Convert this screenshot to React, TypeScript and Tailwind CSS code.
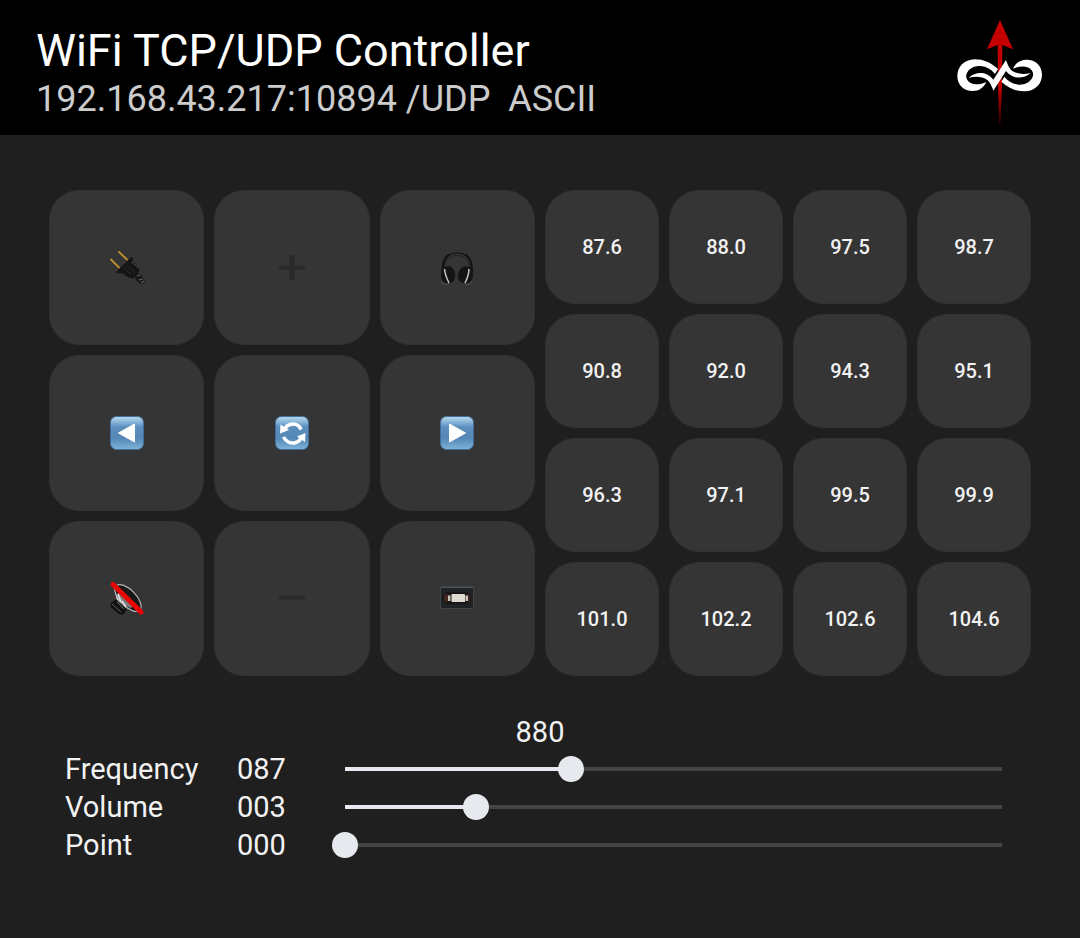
import { useState, type CSSProperties, type ReactNode } from "react";

function Logo() {
  return (
    <svg viewBox="48 24 264 330" className="h-[110px] w-[88px]" aria-hidden="true">
      <defs>
        <linearGradient id="shaft" x1="0" y1="0" x2="0" y2="1">
          <stop offset="0" stopColor="#c80000" />
          <stop offset="0.65" stopColor="#c00000" />
          <stop offset="1" stopColor="#300000" />
        </linearGradient>
      </defs>
      <path d="M180 30L219 118L187 105L186 230L181 346H178L174 230L173 105L141 118Z" fill="url(#shaft)" />
      <g fill="#fff">
        <path d="M174 177C152 158 132 148 104 148C72 149 52 171 52 198C52 226 72 243 98 243C118 243 131 233 139 216C122 224 105 225 92 219C79 212 75 199 82 187C90 173 106 167 122 168C140 170 154 178 165 192Z" />
        <path d="M184 215C206 234 226 244 254 244C286 243 306 221 306 194C306 166 286 149 260 149C240 149 227 159 219 176C236 168 253 167 266 173C279 180 283 193 276 205C268 219 252 225 236 224C218 222 204 214 193 200Z" />
        <path d="M86 203C100 190 124 185 140 193C149 198 155 203 160 209L198 150C203 165 210 178 216 182C230 192 250 194 272 189C258 202 234 207 218 199C209 194 203 190 198 183L160 242C155 227 148 214 142 210C128 200 108 198 86 203Z" />
      </g>
    </svg>
  );
}

function Glyph({ children }: { children: ReactNode }) {
  return (
    <svg viewBox="0 0 60 60" className="size-[60px]" aria-hidden="true">
      {children}
    </svg>
  );
}

function BlueKey({ id, children }: { id: string; children: ReactNode }) {
  return (
    <Glyph>
      <defs>
        <linearGradient id={id} x1="0" y1="0" x2="0" y2="1">
          <stop offset="0" stopColor="#b9d9ee" />
          <stop offset="0.15" stopColor="#8db9dc" />
          <stop offset="0.32" stopColor="#5c8fbe" />
          <stop offset="0.65" stopColor="#5587b5" />
          <stop offset="1" stopColor="#7db3d8" />
        </linearGradient>
      </defs>
      <rect x="13.5" y="13.5" width="33" height="33" rx="6" fill={`url(#${id})`} stroke="#416f99" />
      {children}
    </Glyph>
  );
}

const plug = (
  <Glyph>
    <g stroke="#c0902e" strokeWidth="1.8">
      <path d="M21.5 13.5L30.5 22M13.5 21L22.5 30" />
    </g>
    <path d="M34.5 19L36 20.5L35.5 23L40.5 27.5L42.5 33L40 37L36 40.5L30.5 39L25 35L20.5 35.5L19 34Z" fill="#151515" />
    <path d="M35 24L41 29.5" stroke="#77797c" strokeWidth="1" strokeDasharray="1.5 .7" />
    <path d="M26 30L34 36M29 27L38 35" stroke="#2b2b2b" strokeWidth="1" />
    <path d="M37 37L41 35L45 38L48 43L46 46L43 46L39 42Z" fill="#17181a" />
    <path d="M40 38L43 37M42 42L46 41M44 45L47 43" stroke="#626468" strokeWidth="1.2" />
  </Glyph>
);

const headphones = (
  <Glyph>
    <path d="M15.5 34C15.5 21 20 14.5 30 14.5S45 21 45 34" fill="none" stroke="#121212" strokeWidth="2.2" />
    <path d="M22 16C27 13.2 34 13.2 39 16" fill="none" stroke="#444" strokeWidth=".8" />
    <path d="M17.5 32C18 22 22 17.5 30 17.5S42 22 43 32" fill="none" stroke="#222" strokeWidth="1" />
    <path d="M18 29C24 26 29 32 28 38C28 42 26 45 22 45C16 46 14 42 14 37C14 33 15 31 18 29Z" fill="#141414" />
    <path d="M42 29C36 26 31 32 31 38C31 42 33 45 37 45C43 46 46 42 46 37C46 33 45 31 42 29Z" fill="#141414" />
    <path d="M17.5 31C18 36 20 41 22 45" fill="none" stroke="#c2c4c5" strokeWidth="1.5" />
    <path d="M42 31C42 37 40 41 38 45" fill="none" stroke="#c2c4c5" strokeWidth="1.5" />
    <path d="M14 43C15 46 19 47 22 46M45 43C44 46 41 47 38 46" fill="none" stroke="#606060" strokeWidth=".7" />
  </Glyph>
);

const previous = (
  <BlueKey id="keyPrevious">
    <path d="M21.5 30L37.5 21V39Z" fill="#fff" stroke="#fff" strokeLinejoin="round" />
  </BlueKey>
);

const next = (
  <BlueKey id="keyNext">
    <path d="M38.5 30L22.5 21V39Z" fill="#fff" stroke="#fff" strokeLinejoin="round" />
  </BlueKey>
);

const refresh = (
  <BlueKey id="keyRefresh">
    <path d="M39 26.5C37 21.5 32 20.5 28 21.5C25.5 22.2 24 23.5 23 25.5" fill="none" stroke="#fff" strokeWidth="3.6" />
    <path d="M18.5 21.5L27 27L18 30.5Z" fill="#fff" />
    <path d="M21.5 34C24 39 29 41 34 39.5C36.5 38.7 38 37 39 35" fill="none" stroke="#fff" strokeWidth="3.6" />
    <path d="M43.5 30L43 39L35 33.5Z" fill="#fff" />
  </BlueKey>
);

const mute = (
  <Glyph>
    <defs>
      <linearGradient id="cone" x1="0" y1="0" x2="1" y2="1">
        <stop offset="0" stopColor="#8a8a8a" />
        <stop offset="0.3" stopColor="#e8e8e8" />
        <stop offset="0.5" stopColor="#2a2a2a" />
        <stop offset="0.75" stopColor="#c8c8c8" />
        <stop offset="1" stopColor="#555" />
      </linearGradient>
    </defs>
    <path d="M14 35L19 31L30 41L26 47L22 46L13.5 39Z" fill="#121212" />
    <path d="M15 36L24 44M20 34L27 41" stroke="#606060" strokeWidth="1" />
    <path d="M17 20L19.5 31L24 37L31 41L42 43.5Z" fill="url(#cone)" />
    <ellipse cx="31" cy="30" rx="17" ry="8" transform="rotate(46 31 30)" fill="#191919" stroke="#b5b5b5" strokeWidth="1.2" />
    <ellipse cx="28" cy="32" rx="10" ry="4" transform="rotate(46 28 32)" fill="#7d7d7d" />
    <path d="M21 26L24 34M25 33L29 39" stroke="#e6e6e6" strokeWidth="1.5" />
    <path d="M16 16.5L44 44" stroke="#e80606" strokeWidth="5" strokeLinecap="round" />
  </Glyph>
);

const cassette = (
  <Glyph>
    <rect x="13.5" y="18.5" width="33" height="22" rx="1" fill="#202324" stroke="#494d4f" strokeWidth=".8" />
    <path d="M14 19.5H46" stroke="#5c6062" strokeWidth=".8" />
    <rect x="16" y="24.5" width="28" height="10.5" rx="5" fill="#111" />
    <ellipse cx="20" cy="30" rx="3.2" ry="4" fill="#422820" />
    <ellipse cx="41" cy="30" rx="2.6" ry="4" fill="#3a2420" />
    <path d="M21 27.5H23.5V33H21ZM38.5 27.5H41V33H38.5Z" fill="#c9c3b9" />
    <rect x="24.5" y="26" width="13.5" height="8" rx=".6" fill="#dedbd0" />
    <path d="M19 36H41" stroke="#171717" strokeWidth="1" />
  </Glyph>
);

const plus = (
  <Glyph>
    <path d="M27.5 17H32.5V27.5H43V32H32.5V42H27.5V32H17V27.5H27.5Z" fill="#2a2a2a" />
  </Glyph>
);

const minus = (
  <Glyph>
    <path d="M17 27.5H43V32H17Z" fill="#2a2a2a" />
  </Glyph>
);

const controls = [
  { label: "Power", icon: plug },
  { label: "Volume up", icon: plus },
  { label: "Headphones", icon: headphones },
  { label: "Previous", icon: previous },
  { label: "Refresh", icon: refresh },
  { label: "Next", icon: next },
  { label: "Mute", icon: mute },
  { label: "Volume down", icon: minus },
  { label: "Tape", icon: cassette },
];

const stations = [
  "87.6", "88.0", "97.5", "98.7",
  "90.8", "92.0", "94.3", "95.1",
  "96.3", "97.1", "99.5", "99.9",
  "101.0", "102.2", "102.6", "104.6",
];

const tile =
  "flex aspect-square items-center justify-center rounded-[30px] border border-[#313131] bg-[#353535] active:bg-[#404040]";

function SliderRow({ name, initial, max }: { name: string; initial: number; max: number }) {
  const [value, setValue] = useState(initial);
  const id = name.toLowerCase();
  return (
    <div className="flex h-[38px] items-center">
      <label htmlFor={id} className="w-[172px] shrink-0">
        {name}
      </label>
      <output htmlFor={id} className="w-[95px] shrink-0">
        {String(value).padStart(3, "0")}
      </output>
      <input
        id={id}
        type="range"
        min={0}
        max={max}
        value={value}
        onChange={(e) => setValue(Number(e.target.value))}
        style={{ "--fill": `${(value / max) * 100}%` } as CSSProperties}
        className="h-[26px] min-w-0 flex-1 appearance-none bg-[linear-gradient(to_right,#e6eaee_var(--fill),#444444_var(--fill))] bg-[length:calc(100%-26px)_4px] bg-center bg-no-repeat [&::-webkit-slider-thumb]:size-[26px] [&::-webkit-slider-thumb]:appearance-none [&::-webkit-slider-thumb]:rounded-full [&::-webkit-slider-thumb]:bg-[#e6eaee]"
      />
    </div>
  );
}

export default function App() {
  return (
    <div className="min-h-screen bg-[#1f1f1f] font-[Roboto,sans-serif] text-[#f2f2f2]">
      <header className="flex items-center justify-between bg-black pt-[18px] pr-9 pb-[7px] pl-9">
        <div>
          <h1 className="text-[45px] leading-[52px] text-white">WiFi TCP/UDP Controller</h1>
          <p className="text-[36px] leading-[44px] whitespace-pre text-[#cccccc]">
            {"192.168.43.217:10894 /UDP  ASCII"}
          </p>
        </div>
        <Logo />
      </header>
      <main>
        <div className="grid grid-cols-2 gap-[10px] px-[49px] pt-[55px]">
          <div className="grid grid-cols-3 gap-[10px]">
            {controls.map((c) => (
              <button key={c.label} type="button" aria-label={c.label} className={tile}>
                {c.icon}
              </button>
            ))}
          </div>
          <div className="grid grid-cols-4 gap-[10px]">
            {stations.map((s) => (
              <button key={s} type="button" className={`${tile} text-[20px] font-medium`}>
                {s}
              </button>
            ))}
          </div>
        </div>
        <section className="px-[65px] pt-[38px] pb-10 text-[29px] leading-[38px]">
          <p className="text-center leading-9">880</p>
          <SliderRow name="Frequency" initial={87} max={253} />
          <SliderRow name="Volume" initial={3} max={15} />
          <SliderRow name="Point" initial={0} max={255} />
        </section>
      </main>
    </div>
  );
}
